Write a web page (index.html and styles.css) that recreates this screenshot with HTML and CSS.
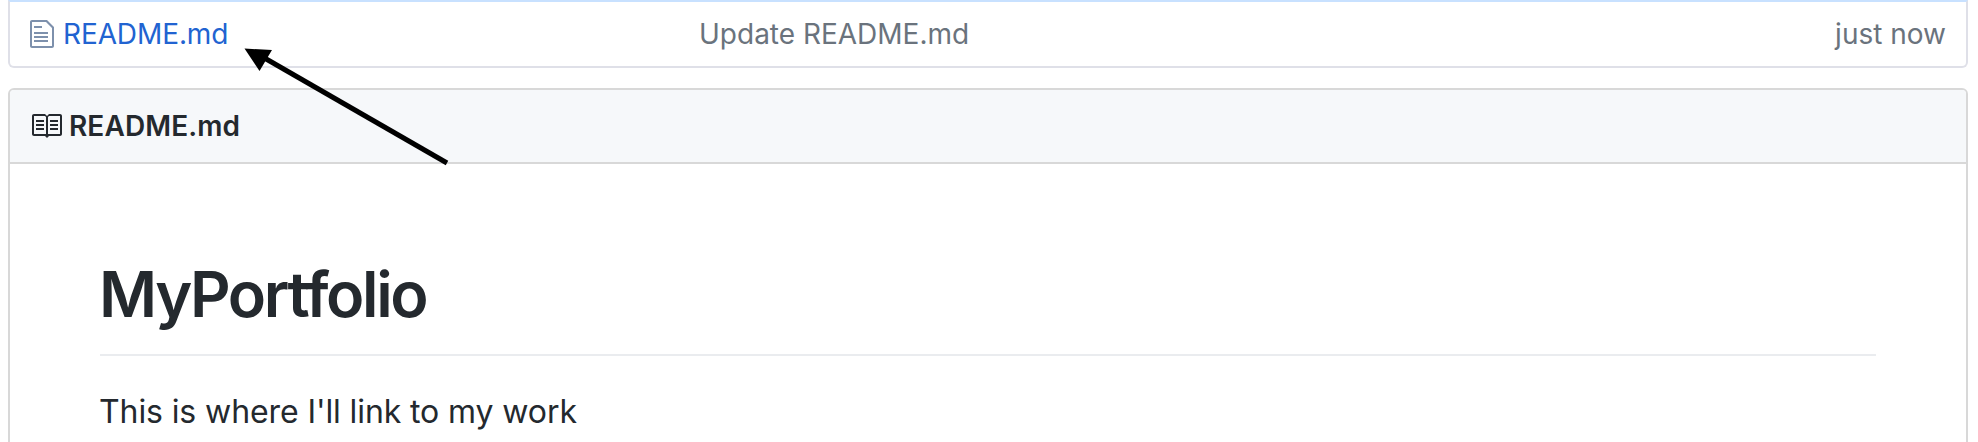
FILE: index.html
```html
<!DOCTYPE html>
<html lang="en">
<head>
<meta charset="utf-8">
<title>MyPortfolio</title>
<link rel="stylesheet" href="styles.css">
</head>
<body>
<main class="page">
  <div class="file-row">
    <div class="file-name">
      <svg class="icon-file" viewBox="0 0 12 16" width="24" height="32"><path d="M6 5H2V4h4v1zM2 8h7V7H2v1zm0 2h7V9H2v1zm0 2h7v-1H2v1zm10-7.5V14c0 .55-.45 1-1 1H1c-.55 0-1-.45-1-1V2c0-.55.45-1 1-1h7.5L12 4.5zM11 5L8 2H1v12h10V5z"/></svg>
      <a class="file-link">README.md</a>
    </div>
    <span class="file-message">Update README.md</span>
    <span class="file-age">just now</span>
  </div>
  <section class="readme">
    <header class="readme-header">
      <svg class="icon-book" viewBox="0 0 16 16" width="32" height="32"><path d="M3 5h4v1H3V5zm0 3h4V7H3v1zm0 2h4V9H3v1zm11-5h-4v1h4V5zm0 2h-4v1h4V7zm0 2h-4v1h4V9zm2-6v9c0 .55-.45 1-1 1H9.5l-1 1-1-1H2c-.55 0-1-.45-1-1V3c0-.55.45-1 1-1h5.5l1 1 1-1H15c.55 0 1 .45 1 1zm-8 .5L7.5 3H2v9h6V3.5zm7-.5H9.5l-.5.5V12h6V3z"/></svg>
      <span class="readme-title">README.md</span>
    </header>
    <article class="readme-body">
      <h1 class="heading">MyPortfolio</h1>
      <p class="text">This is where I'll link to my work</p>
    </article>
  </section>
  <svg class="arrow" viewBox="0 0 210 122" width="210" height="122"><path d="M20 12L206 119" class="arrow-line"/><path d="M3.5 4.5L31 6L18.5 27Z"/></svg>
</main>
</body>
</html>
```
FILE: styles.css
```css
* { box-sizing: border-box; }
body {
  margin: 0;
  background: #fff;
  color: #24292e;
  font-family: Inter, "Liberation Sans", sans-serif;
  font-size: 28px;
}
.page {
  position: relative;
  height: 442px;
  padding: 0 10px 0 8px;
  overflow: hidden;
}
.file-row {
  display: grid;
  grid-template-columns: 669px 1fr auto;
  align-items: center;
  height: 68px;
  padding: 0 20px;
  border: 2px solid #dfe0e8;
  border-top-color: #c8e1ff;
  border-radius: 0 0 6px 6px;
  color: #6a737d;
}
.file-name { display: flex; align-items: center; gap: 9px; }
.icon-file { fill: #7d90ac; }
.file-link { color: #2163d1; letter-spacing: -0.1px; }
.readme {
  height: 380px;
  margin-top: 20px;
  border: 2px solid #d8d8d8;
  border-radius: 6px 6px 0 0;
}
.readme-header {
  display: flex;
  align-items: center;
  gap: 7px;
  height: 74px;
  padding: 0 20px;
  border-bottom: 2px solid #d8d8d8;
  border-radius: 4px 4px 0 0;
  background: #f6f8fa;
}
.icon-book { fill: #24292e; }
.readme-title { font-weight: 600; letter-spacing: 0.1px; }
.readme-body { padding: 90px 90px 0; }
.heading {
  height: 102px;
  margin: 0 0 32px;
  border-bottom: 2px solid #eaecef;
  font-size: 63px;
  font-weight: 600;
  line-height: 81px;
  letter-spacing: -2.4px;
  text-indent: -1px;
}
.text { margin: 0; font-size: 32px; line-height: 48px; letter-spacing: -0.1px; text-indent: -1px; }
.arrow { position: absolute; left: 241px; top: 44px; }
.arrow-line { stroke: #000; stroke-width: 5; }
```
